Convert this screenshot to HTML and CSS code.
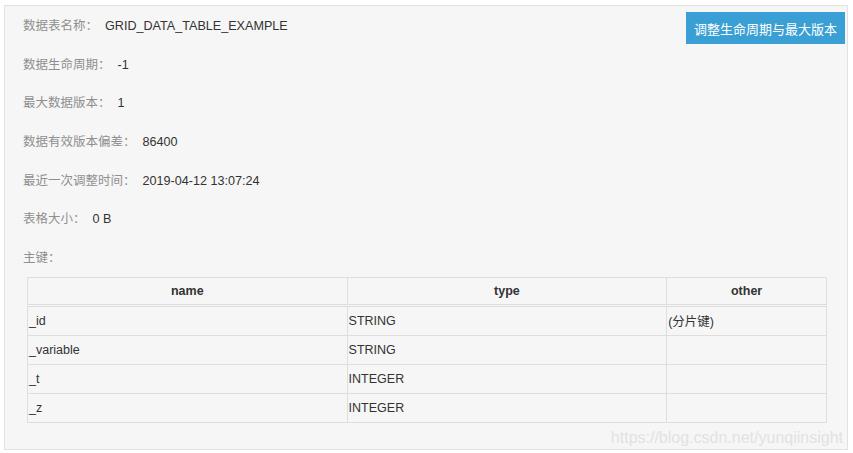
FILE: index.html
```html
<!DOCTYPE html>
<html lang="zh">
<head>
<meta charset="utf-8">
<link rel="stylesheet" href="styles.css">
</head>
<body>
<div class="panel">
  <div class="top">
    <div class="info">
      <div class="row"><span class="label">数据表名称：</span><span class="value">GRID_DATA_TABLE_EXAMPLE</span></div>
      <div class="row"><span class="label">数据生命周期：</span><span class="value">-1</span></div>
      <div class="row"><span class="label">最大数据版本：</span><span class="value">1</span></div>
      <div class="row"><span class="label">数据有效版本偏差：</span><span class="value">86400</span></div>
      <div class="row"><span class="label">最近一次调整时间：</span><span class="value">2019-04-12 13:07:24</span></div>
      <div class="row"><span class="label">表格大小：</span><span class="value">0 B</span></div>
      <div class="row"><span class="label">主键：</span></div>
    </div>
    <button class="btn">调整生命周期与最大版本</button>
  </div>
  <table class="keys">
    <colgroup>
      <col class="c1"><col class="c2"><col class="c3">
    </colgroup>
    <thead>
      <tr><th>name</th><th>type</th><th>other</th></tr>
    </thead>
    <tbody>
      <tr><td>_id</td><td>STRING</td><td>(分片键)</td></tr>
      <tr><td>_variable</td><td>STRING</td><td></td></tr>
      <tr><td>_t</td><td>INTEGER</td><td></td></tr>
      <tr><td>_z</td><td>INTEGER</td><td></td></tr>
    </tbody>
  </table>
  <div class="watermark">https://blog.csdn.net/yunqiinsight</div>
</div>
</body>
</html>
```
FILE: styles.css
```css
html, body {
  margin: 0;
  padding: 0;
  background: #ffffff;
}
body {
  font-family: "Liberation Sans", Arial, "Noto Sans CJK SC", sans-serif;
  font-size: 13px;
  color: #333;
}
.panel {
  position: relative;
  box-sizing: border-box;
  margin: 5px 0 0 4px;
  width: 844px;
  height: 445px;
  background: #f6f6f6;
  border: 1px solid #e2e2e2;
  padding: 0 2px 0 18px;
}
.top {
  display: flex;
  justify-content: space-between;
  align-items: flex-start;
}
.info {
  display: flex;
  flex-direction: column;
}
.row {
  height: 38.67px;
  line-height: 38.67px;
  white-space: nowrap;
}
.label {
  color: #8f8f8f;
  font-family: "Noto Sans CJK SC", "Liberation Sans", sans-serif;
  font-size: 12.5px;
}
.value {
  margin-left: 7px;
  color: #333;
  font-size: 12.6px;
}
.btn {
  margin-top: 6px;
  width: 159px;
  height: 32px;
  padding: 0;
  border: none;
  background: #3a9fd4;
  color: #fff;
  font-family: "Noto Sans CJK SC", "Liberation Sans", sans-serif;
  font-size: 13px;
  cursor: pointer;
}
.keys {
  margin-left: 4px;
  width: 800px;
  border-collapse: collapse;
  table-layout: fixed;
  font-size: 12.5px;
  color: #333;
}
.c1, .c2 { width: 40%; }
.c3 { width: 20%; }
.keys th, .keys td {
  border: 1px solid #dedede;
  height: 28px;
  padding: 0 1px;
  text-align: left;
  white-space: nowrap;
  overflow: hidden;
}
.keys th {
  text-align: center;
  font-weight: bold;
  border-bottom: 3px double #dcdcdc;
  height: 26px;
}
.watermark {
  position: absolute;
  right: 4px;
  bottom: 2px;
  font-size: 16px;
  color: #e2e2e2;
}
```
